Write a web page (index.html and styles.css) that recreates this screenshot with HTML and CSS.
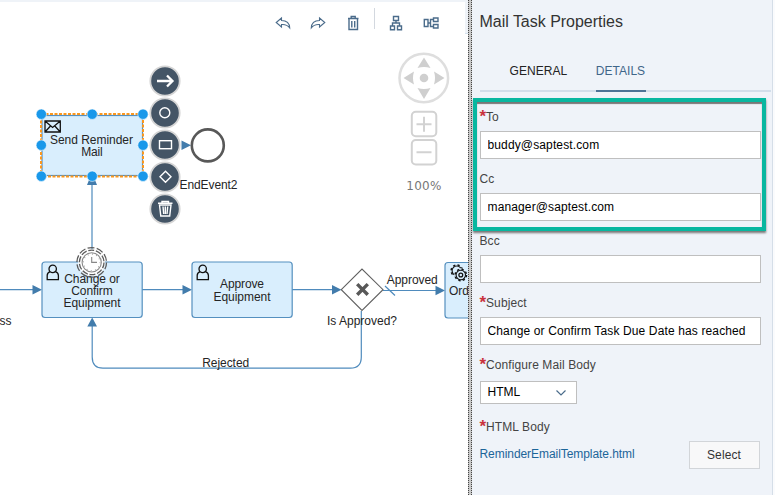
FILE: index.html
```html
<!DOCTYPE html>
<html lang="en">
<head>
<meta charset="utf-8">
<title>Workflow Editor</title>
<link rel="stylesheet" href="styles.css">
</head>
<body>
<div class="app">
  <main class="canvas">
    <svg class="diagram" viewBox="0 0 468 495" width="468" height="495">
      <defs>
        <g id="user"><circle cx="6.2" cy="4.6" r="3.7"/><path d="M3.6 7.4C1.6 8.3.7 9.3.7 11.2V15.4H11.900V11.200C11.900 9.300 11 8.300 8.900 7.400"/></g>
        <g id="gear"><circle r="4.700" stroke-width="1.100"/><circle r="5.700" stroke-width="1.500" stroke-dasharray="2.240 2.240"/></g>
      </defs>
      <g class="flow">
        <path d="M0 289.7H34M142 289.7H184M292 289.7H333M383 290.5H437M92 262V184M361.3 311V357Q361.3 368.2 350.3 368.2H103Q92.2 368.2 92.2 357V325M385 286L395 295.5"/>
      </g>
      <g class="arrow">
        <path d="M32.5 285V294.5L42 289.7ZM182.5 285V294.5L192 289.7ZM332 285V294.5L341.5 289.7ZM435.5 285.7V295.3L445 290.5ZM87.3 326.5H97L92.2 317.5ZM181.5 140.5V150L191 145.3ZM87 185H97L95 180H89Z"/>
      </g>
      <g class="task">
        <rect x="42" y="115.500" width="100.500" height="60"/>
        <rect x="42" y="262" width="100.2" height="55.5" rx="3"/>
        <rect x="192" y="262" width="100.2" height="55.5" rx="3"/>
        <rect x="445" y="262.5" width="60" height="55.5" rx="3"/>
      </g>
      <rect class="selection" x="41" y="114" width="102" height="62.500"/>
      <g class="symbol">
        <path d="M45 121H60.3V132H45ZM45 121L52.6 127.5L60.3 121M45 132L50.5 126M60.3 132L54.8 126"/>
        <use href="#user" x="46.5" y="264.3"/>
        <use href="#user" x="196.5" y="264.3"/>
        <use href="#gear" x="456.8" y="270.7"/>
        <circle cx="460.8" cy="275" r="6.800" class="mask"/>
        <use href="#gear" x="460.8" y="275"/>
        <circle cx="460.8" cy="275" r="1.900"/>
      </g>
      <path class="gateway" d="M341.3 289.7L362 269L383 289.7L362 310.5Z"/>
      <path class="cross" d="M357.2 284.1L367.800 294.700M367.800 284.100L357.200 294.700"/>
      <circle class="end" cx="207.8" cy="145.4" r="16"/>
      <g class="label">
        <text x="91.500" y="143.7" textLength="83">Send Reminder</text>
        <text x="92" y="156" textLength="21.5">Mail</text>
        <text x="92" y="282.7" textLength="55.5">Change or</text>
        <text x="92" y="294.500" textLength="41.5">Confirm</text>
        <text x="92" y="306.500" textLength="57">Equipment</text>
        <text x="242" y="288.3" textLength="44">Approve</text>
        <text x="242" y="300.500" textLength="57">Equipment</text>
        <text x="208.5" y="189.3" textLength="58">EndEvent2</text>
        <text x="412.3" y="283.6" textLength="51">Approved</text>
        <text x="362" y="325.3" textLength="70">Is Approved?</text>
        <text x="225.7" y="367" textLength="47">Rejected</text>
        <text x="5.5" y="325" textLength="12">ss</text>
        <text x="459" y="295" textLength="20">Ord</text>
      </g>
      <g class="timer">
        <circle cx="91.7" cy="262.4" r="13.500" class="disc"/>
        <circle cx="91.7" cy="262.4" r="14.8" stroke-dasharray="7 2.3"/>
        <circle cx="91.7" cy="262.4" r="12.3" stroke-dasharray="6 1.73"/>
        <circle cx="91.7" cy="262.4" r="9.6" class="dial"/>
        <circle cx="91.7" cy="262.4" r="8.3" class="dial" stroke-dasharray=".8 3.55"/>
        <path class="dial" d="M91.7 257V262.4H97"/>
      </g>
      <g class="handle">
        <circle cx="41.3" cy="114.2" r="5.2"/><circle cx="92.2" cy="114.2" r="5.2"/><circle cx="143" cy="114.2" r="5.2"/>
        <circle cx="41.3" cy="145.2" r="5.2"/><circle cx="143" cy="145.2" r="5.2"/>
        <circle cx="41.3" cy="176.2" r="5.2"/><circle cx="92.2" cy="176.2" r="5.2"/><circle cx="143" cy="176.2" r="5.2"/>
      </g>
      <g class="pad">
        <circle cx="165" cy="81" r="14.7"/><circle cx="165" cy="113" r="14.7"/><circle cx="165" cy="145" r="14.7"/><circle cx="165" cy="177" r="14.7"/><circle cx="165" cy="209" r="14.7"/>
      </g>
      <g class="padicon">
        <path class="bold" d="M157 81H172M167 75.5L172.5 81L167 86.5"/>
        <circle cx="164.8" cy="112.7" r="5"/>
        <rect x="159.5" y="140.7" width="12" height="8"/>
        <path d="M165.5 171.3L171 176.8L165.5 182.3L160 176.8Z"/>
        <path d="M158 203.3H172.5M162 203V201.5H168.5V203M159.5 205L160.8 216H169.7L171 205ZM163 206.5L163.7 214M165.3 206.5V214M167.7 206.5L167 214"/>
      </g>
      <g class="zoomer">
        <circle cx="423.8" cy="78" r="24.3" class="ring"/>
        <circle cx="424" cy="78" r="4.3" class="fill"/>
        <path class="fill" d="M417.5 68L424 57.5L430.5 68Q424 66 417.5 68ZM417.5 88L424 99L430.5 88Q424 90 417.5 88ZM414 71.5L403.5 78L414 84.5Q412 78 414 71.5ZM434 71.5L444.5 78L434 84.5Q436 78 434 71.5Z"/>
        <rect x="411.8" y="111.8" width="24.5" height="24.5" rx="4"/>
        <rect x="411.8" y="140" width="24.5" height="24.5" rx="4"/>
        <path d="M416.5 124.2H431.5M424 116.7V131.7M416.5 152.2H431.5"/>
        <text x="423.8" y="190" textLength="35">100%</text>
      </g>
    </svg>
    <header class="toolbar">
      <svg class="tool" viewBox="0 0 16 16"><path d="M6.5 3L1.200 7.500L6.500 12V9.500C9.500 9.200 12.500 10 14.700 12.800C14.500 8.500 12 5.700 6.500 5.500Z"/></svg>
      <svg class="tool" viewBox="0 0 16 16"><path d="M9.500 3L14.800 7.500L9.500 12V9.500C6.500 9.200 3.500 10 1.300 12.800C1.500 8.500 4 5.700 9.500 5.500Z"/></svg>
      <svg class="tool" viewBox="0 0 16 16"><path class="strong" d="M3 3.500H13.500M6.200 3V1.500H10.200V3M4 4V14.500H12.500V4M6.800 6V12.500M9.700 6V12.500"/></svg>
      <i class="divider"></i>
      <svg class="tool" viewBox="0 0 16 16"><path class="strong" d="M5.500 1.500H10.500V5.500H5.500ZM8 5.500V8M4.500 11V8H11.500V11M2.500 11H6.500V14.700H2.500ZM9.500 11H13.500V14.700H9.500Z"/></svg>
      <svg class="tool" viewBox="0 0 16 16"><path class="strong" d="M1.300 4.500H5V11.500H1.300ZM5 8H7.500M10.500 4.500H7.500V11.500H10.500M10.500 3H15V6.500H10.500ZM10.500 9.500H15V13H10.500Z"/></svg>
      <i class="corner"></i>
    </header>
  </main>
  <div class="splitter"></div>
  <aside class="panel">
    <h1 class="title">Mail Task Properties</h1>
    <nav class="tabs"><span class="tab">GENERAL</span><span class="tab active">DETAILS</span></nav>
    <form class="form">
      <div class="field"><label class="required">To</label><input type="text" value="buddy@saptest.com"></div>
      <div class="field"><label>Cc</label><input type="text" value="manager@saptest.com"></div>
      <div class="field"><label>Bcc</label><input type="text"></div>
      <div class="field"><label class="required">Subject</label><input class="subject" type="text" value="Change or Confirm Task Due Date has reached"></div>
      <div class="field"><label class="required">Configure Mail Body</label>
        <div class="select"><span>HTML</span><svg class="chevron" viewBox="0 0 12 8"><path d="M1.500 1.500L6 6L10.500 1.500"/></svg></div></div>
      <div class="field"><label class="required body-label">HTML Body</label>
        <div class="file"><a class="link">ReminderEmailTemplate.html</a><button type="button">Select</button></div></div>
    </form>
    <div class="highlight"></div>
  </aside>
</div>
</body>
</html>
```
FILE: styles.css
```css
* { box-sizing: border-box; }
body { margin: 0; overflow: hidden; background: #fafbfd; font-family: "Liberation Sans", Arial, sans-serif; }
.app { display: flex; height: 495px; }

.canvas { position: relative; width: 468px; border-top: 2px solid #eff3f8; background: #fff; overflow: hidden; }
.diagram { position: absolute; left: 0; top: -2px; }
.toolbar { position: relative; display: flex; align-items: center; height: 32px; padding: 10px 0 0 275px; }
.tool { width: 16px; height: 16px; margin-right: 19px; fill: none; stroke: #4b6c8b; stroke-width: 1.1; }
.tool .strong { stroke-width: 1.4; }
.divider { width: 1px; height: 21px; margin: -10px 13px 0 -6px; background: #d3d8df; }
.corner { position: absolute; right: 0; top: 0; width: 3px; height: 32px; background: #eff3f8; border-bottom: 1px solid #d5e2ee; }

.flow { fill: none; stroke: #4f8bbd; stroke-width: 1.2; }
.arrow { fill: #427cac; }
.task { fill: #d9eefd; stroke: #5590bf; stroke-width: 1.2; }
.selection { fill: none; stroke: #fa971f; stroke-width: 2; stroke-dasharray: 3 1.5; }
.symbol { fill: none; stroke: #111; stroke-width: 1.3; }
.symbol .mask { fill: #d9eefd; stroke: none; }
.gateway { fill: #fff; stroke: #606060; stroke-width: 1.1; }
.cross { stroke: #585858; stroke-width: 3.4; }
.end { fill: #fff; stroke: #585858; stroke-width: 2.6; }
.timer { fill: none; stroke: #5b5b5b; stroke-width: 1.3; }
.timer .disc { fill: #fff; stroke: none; }
.timer .dial { stroke: #888; stroke-width: 1.1; }
.label { font-size: 12px; fill: #252525; text-anchor: middle; }
.handle { fill: #1998ea; stroke: #fff; stroke-width: .6; }
.pad { fill: #445566; stroke: #d5d5d5; stroke-width: 1.8; }
.padicon { fill: none; stroke: #fff; stroke-width: 1.4; }
.padicon .bold { stroke-width: 2.3; }
.zoomer { fill: none; stroke: #d2d2d2; stroke-width: 2; }
.zoomer .ring { stroke: #dedede; stroke-width: 2.5; }
.zoomer .fill { fill: #cfcfcf; stroke: none; }
.zoomer text { font: 12px "DejaVu Sans", sans-serif; fill: #777; stroke: none; text-anchor: middle; }

.splitter { width: 4px; background: repeating-linear-gradient(to bottom, transparent 0 1px, #c8c8c8 1px 2px), linear-gradient(to right, #444 0 1px, #c8c8c8 1px 3px, #444 3px 4px); }

.panel { position: relative; width: 301px; padding-left: 7.5px; background: #eff3f9; border-right: 1px solid #d5dee8; }
.title { margin: 0; height: 50px; padding-top: 12px; font-size: 16px; line-height: 20px; font-weight: 400; color: #333; letter-spacing: -.02px; }
.tabs { display: flex; gap: 28.5px; height: 42px; margin-right: 1px; padding: 12px 0 0 30px; border-bottom: 2px solid #d2deea; font-size: 12px; line-height: 18px; color: #222; }
.tab { height: 30px; letter-spacing: .05px; }
.tab.active { width: 50px; color: #3f6689; border-bottom: 2px solid #4d7396; }
.form { padding: 14px 11px 0 0; }
.field { height: 62px; }
.field label { display: block; height: 25px; padding-top: 3px; font-size: 12px; line-height: 16px; color: #444; letter-spacing: .1px; }
.required::before { content: "*"; display: inline-block; width: 6.5px; height: 14px; font-size: 17px; line-height: 16px; font-weight: 700; color: #c9333d; vertical-align: top; letter-spacing: 0; }
.field input { display: block; width: 281px; height: 28px; padding: 0 7px; border: 1px solid #bfbfbf; border-radius: 0; background: #fff; color: #000; font: 12px "Liberation Sans", Arial, sans-serif; letter-spacing: .13px; outline: 0; }
.select { display: flex; justify-content: space-between; align-items: center; width: 97px; height: 23px; margin-top: 2px; padding: 0 9px 2px 7px; border: 1px solid #bfbfbf; background: #fff; color: #000; font-size: 12px; }
.chevron { width: 12px; height: 8px; margin-top: 3px; fill: none; stroke: #4b6c8b; stroke-width: 1.2; }
.file { display: flex; justify-content: space-between; height: 28px; padding-right: 1.5px; }
.link { color: #1c6599; font-size: 12px; line-height: 26px; letter-spacing: -.06px; }
.file button { width: 71px; height: 28px; border: 1px solid #d2d5d9; background: #f8f8f9; color: #333; font: 12px "Liberation Sans", Arial, sans-serif; letter-spacing: .1px; padding: 0; }
.highlight { position: absolute; left: 1px; top: 98px; width: 293px; height: 133px; border: 4px solid #08b7a0; box-shadow: 0 2px 2px #777, inset 0 2px 1px #777; pointer-events: none; }
```
